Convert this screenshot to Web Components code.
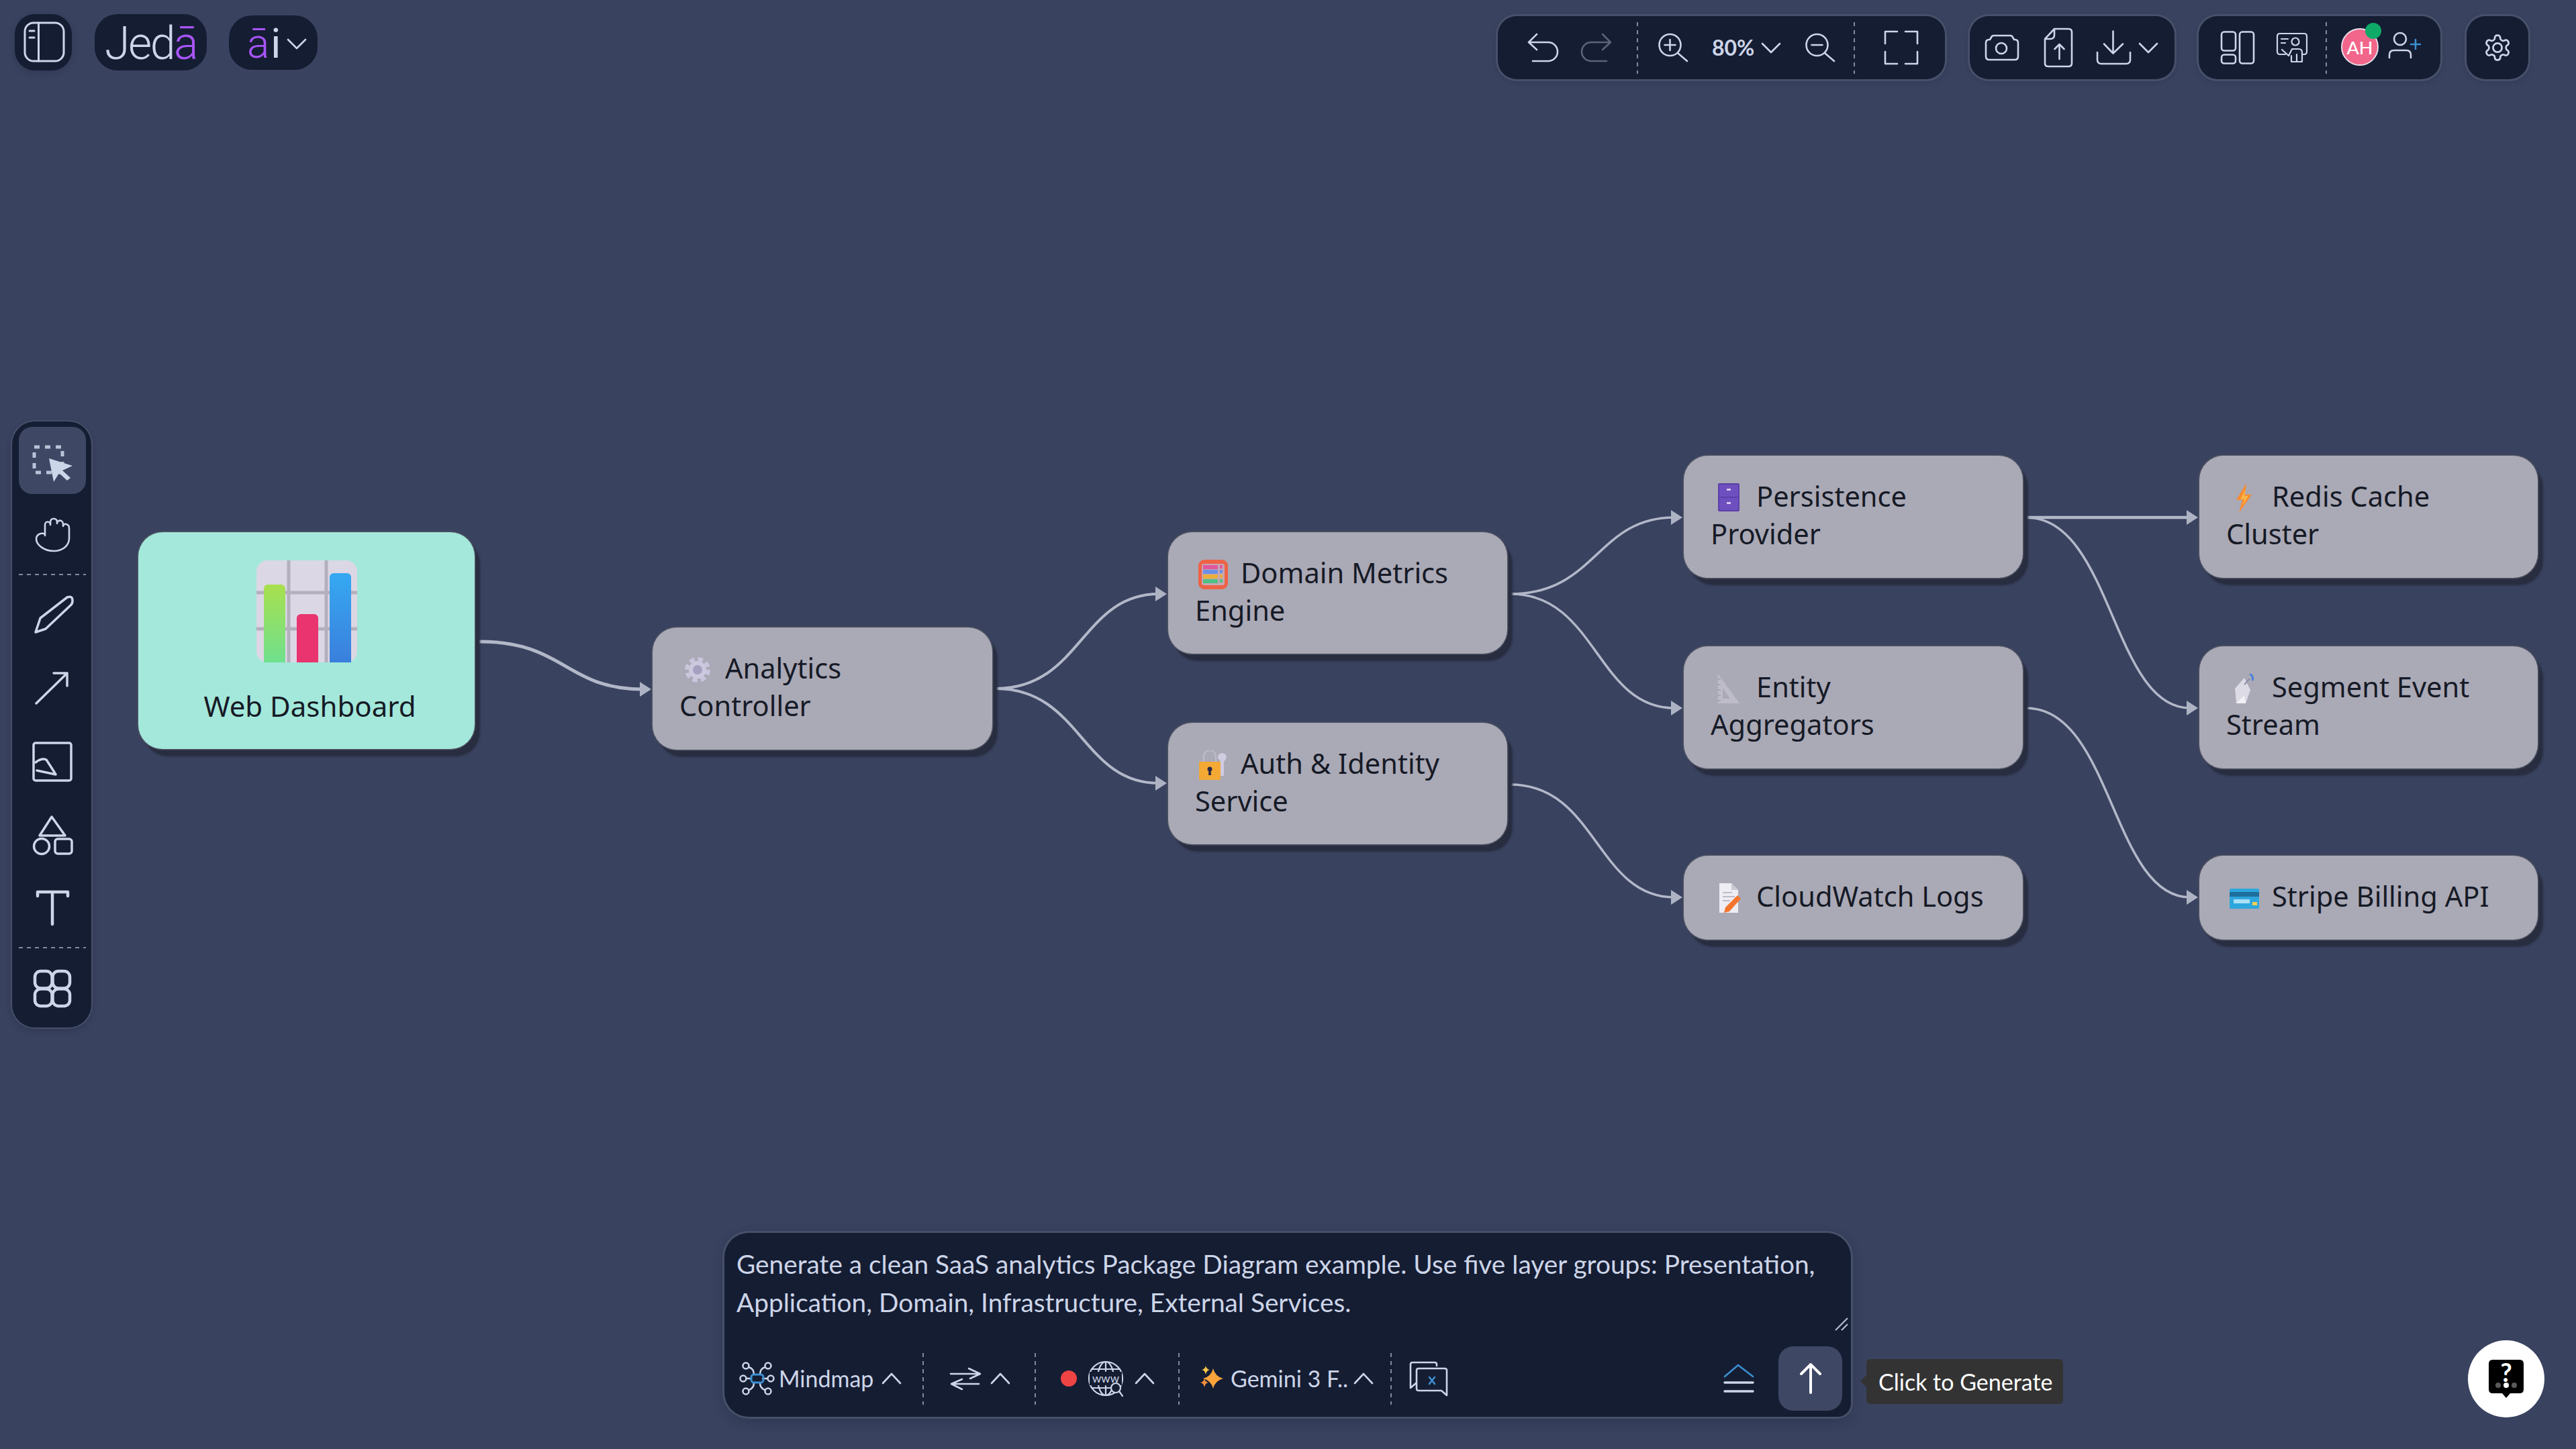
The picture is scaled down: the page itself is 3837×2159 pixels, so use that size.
<!DOCTYPE html>
<html lang="en">
<head>
<meta charset="utf-8">
<title>Jedā</title>
<style>
  html, body { margin: 0; padding: 0; background: #39425f; }
  body { font-family: "Lato", "Liberation Sans", sans-serif; color: #cdd5e8; }
</style>
</head>
<body>
<app-shell>
  <flow-canvas slot="canvas">
    <flow-node x="206" y="793" w="501" h="323" kind="root"><node-emoji slot="hero" name="chart" size="152"></node-emoji>Web Dashboard</flow-node>
    <flow-node x="972" y="935" w="506" h="182"><node-emoji name="gear"></node-emoji>Analytics<br>Controller</flow-node>
    <flow-node x="1740" y="793" w="505" h="181"><node-emoji name="metrics"></node-emoji>Domain Metrics<br>Engine</flow-node>
    <flow-node x="1740" y="1077" w="505" h="181"><node-emoji name="lock"></node-emoji>Auth &amp; Identity<br>Service</flow-node>
    <flow-node x="2508" y="679" w="505" h="182"><node-emoji name="cabinet"></node-emoji>Persistence<br>Provider</flow-node>
    <flow-node x="2508" y="963" w="505" h="182"><node-emoji name="ruler"></node-emoji>Entity<br>Aggregators</flow-node>
    <flow-node x="2508" y="1275" w="505" h="125"><node-emoji name="memo"></node-emoji>CloudWatch Logs</flow-node>
    <flow-node x="3276" y="679" w="504" h="182"><node-emoji name="bolt"></node-emoji>Redis Cache<br>Cluster</flow-node>
    <flow-node x="3276" y="963" w="504" h="182"><node-emoji name="dish"></node-emoji>Segment Event<br>Stream</flow-node>
    <flow-node x="3276" y="1275" w="504" h="125"><node-emoji name="card"></node-emoji>Stripe Billing API</flow-node>
  </flow-canvas>

  <top-bar slot="top">
    <tool-group slot="left" style="width:85px;height:84px;justify-content:center;--r:30px;--edge:transparent">
      <ui-icon name="panel"></ui-icon>
    </tool-group>
    <logo-mark slot="left" style="margin-left:34px;width:167px;height:84px"><span>Jed</span><b>ā</b></logo-mark>
    <logo-mark slot="left" small style="margin-left:33px;margin-top:2px;width:132px;height:81px"><b>ā</b><span>i</span><ui-icon name="chev-down" style="width:44px"></ui-icon></logo-mark>

    <tool-group slot="right" style="width:666px;padding-left:29px">
      <ui-icon name="undo" style="width:78px"></ui-icon>
      <ui-icon name="redo" style="width:78px;color:#5b6376"></ui-icon>
      <ui-sep style="margin:0 22px"></ui-sep>
      <ui-icon name="zoom-in" style="width:60px"></ui-icon>
      <ui-label style="margin-left:28px;width:62px;font-size:32px;font-weight:700">80%</ui-label>
      <ui-icon name="chev-down" style="width:52px"></ui-icon>
      <ui-icon name="zoom-out" style="width:94px"></ui-icon>
      <ui-sep style="margin-left:3px"></ui-sep>
      <ui-icon name="fullscreen" style="width:130px;margin-left:4px"></ui-icon>
    </tool-group>
    <tool-group slot="right" style="width:305px;margin-left:37px;padding-left:16px">
      <ui-icon name="camera"></ui-icon>
      <ui-icon name="upload" style="margin-left:20px"></ui-icon>
      <ui-icon name="download" style="margin-left:18px"></ui-icon>
      <ui-icon name="chev-down" style="width:40px"></ui-icon>
    </tool-group>
    <tool-group slot="right" style="width:360px;margin-left:36px;padding-left:26px">
      <ui-icon name="layout"></ui-icon>
      <ui-icon name="presenter" style="margin-left:17px"></ui-icon>
      <ui-sep style="margin-left:18px"></ui-sep>
      <user-avatar style="margin-left:21px">AH</user-avatar>
      <ui-icon name="user-plus" style="margin-left:3px"></ui-icon>
    </tool-group>
    <tool-group slot="right" style="width:92px;margin-left:39px;justify-content:center">
      <ui-icon name="gear"></ui-icon>
    </tool-group>
  </top-bar>

  <tool-rail slot="rail">
    <ui-icon box="72" name="select" active style="height:100px;width:100px;margin-top:8px"></ui-icon>
    <ui-icon box="72" name="hand" style="margin-top:24px"></ui-icon>
    <ui-sep horizontal style="margin-top:23px"></ui-sep>
    <ui-icon box="72" name="pencil" style="margin-top:20px"></ui-icon>
    <ui-icon box="72" name="arrow" style="margin-top:40px"></ui-icon>
    <ui-icon box="72" name="image" style="margin-top:38px"></ui-icon>
    <ui-icon box="72" name="shapes" style="margin-top:38px"></ui-icon>
    <ui-icon box="72" name="text" style="margin-top:37px"></ui-icon>
    <ui-sep horizontal style="margin-top:21px"></ui-sep>
    <ui-icon box="72" name="grid" style="margin-top:24px"></ui-icon>
  </tool-rail>

  <prompt-box slot="bottom">
    Generate a clean SaaS analytics Package Diagram example. Use five layer groups: Presentation, Application, Domain, Infrastructure, External Services.
    <ui-icon slot="row" name="mindmap"></ui-icon>
    <ui-label slot="row" style="width:140px;font-size:34px">Mindmap</ui-label>
    <ui-icon slot="row" name="chev-up" style="width:56px"></ui-icon>
    <ui-sep slot="row" style="margin:0 18px"></ui-sep>
    <ui-icon slot="row" name="swap" style="margin-left:11px"></ui-icon>
    <ui-icon slot="row" name="chev-up" style="width:42px"></ui-icon>
    <ui-sep slot="row" style="margin:0 30px"></ui-sep>
    <ui-icon slot="row" name="dot" style="width:38px;margin-left:0"></ui-icon>
    <ui-icon slot="row" name="globe" style="margin-left:4px"></ui-icon>
    <ui-icon slot="row" name="chev-up" style="width:52px"></ui-icon>
    <ui-sep slot="row" style="margin:0 24px"></ui-sep>
    <ui-icon slot="row" name="sparkle" style="width:50px"></ui-icon>
    <ui-label slot="row" style="margin-left:2px;width:174px;font-size:34px">Gemini 3 F..</ui-label>
    <ui-icon slot="row" name="chev-up" style="width:48px"></ui-icon>
    <ui-sep slot="row" style="margin:0 16px"></ui-sep>
    <ui-icon slot="row" name="chat-x" style="margin-left:7px"></ui-icon>
    <ui-icon slot="row" name="collapse" style="margin-left:auto"></ui-icon>
    <send-button slot="row" style="margin-left:28px"></send-button>
  </prompt-box>
  <hint-tip slot="bottom">Click to Generate</hint-tip>
  <help-fab slot="bottom"></help-fab>
</app-shell>

<script>
const BLUE = '#3b8fd0'

const ICONS = {
  panel: `<g style="stroke-width:3"><rect x="4" y="3" width="58" height="57" rx="13"/><path d="M24.500 3V60M11 15h7M11 25h7"/></g>`,
  'chev-down': `<path d="M19 26 32 39 45 26"/>`,
  'chev-up': `<path d="M19 39 32 25 45 39"/>`,
  undo: `<path d="M22 12 10 24 22 35M10 24H39a14 14 0 0 1 0 28H16"/>`,
  redo: `<path d="M42 12 54 24 42 35M54 24H25a14 14 0 0 0 0 28H48"/>`,
  'zoom-in': `<circle cx="27.5" cy="28" r="16"/><path d="M39 40 53 52M27.5 20V36M19.5 28H35.5"/>`,
  'zoom-out': `<circle cx="27.5" cy="28" r="16"/><path d="M39 40 53 52M19.5 28H35.5"/>`,
  fullscreen: `<path d="M8 26V8H26M38 8H56V26M8 38V56H26M38 56H56V38"/>`,
  camera: `<path d="M14 20 17 15Q18 14 20 14H44Q46 14 47 15L50 20H51Q56 20 56 25V45Q56 50 51 50H13Q8 50 8 45V25Q8 20 13 20Z"/><circle cx="31" cy="33" r="8"/>`,
  upload: `<path d="M26 4H47Q52 4 52 9V55Q52 60 47 60H17Q12 60 12 55V19ZM12 19H20Q26 19 26 13V4M33.5 49V27M26.5 34 33.5 27 40.5 34"/>`,
  download: `<path d="M31.5 7.5V40.5M18 26.5 31.5 40.5 46 26.5M8 39V50Q8 56 14 56H51Q57 56 57 50V39"/>`,
  layout: `<rect x="8" y="8.5" width="21" height="28" rx="4"/><rect x="8" y="42.5" width="21" height="13" rx="4"/><rect x="35" y="8.5" width="21" height="47" rx="4"/>`,
  presenter: `<path d="M22 42H14Q10 42 10 38V15Q10 11 14 11H50Q54 11 54 15V38Q54 42 50 42H47M16 19H26M16 25H22" style="stroke-width:2.200"/><circle cx="37" cy="23" r="5.5" style="stroke-width:2.200"/><path d="M17 35 27 44 32 34H42Q47 34 47 39V53H31V44M39 53V42" style="stroke-width:2.200"/>`,
  'user-plus': `<circle cx="29" cy="19" r="9"/><path d="M13 47V43Q13 36 20 36H38Q45 36 45 43V47"/><path d="M52 20V34M45 27H59" style="stroke:${BLUE}"/>`,
  gear: `<g transform="translate(10 10) scale(1.84)" style="stroke-width:1.5"><path d="M12.22 2h-.44a2 2 0 0 0-2 2v.18a2 2 0 0 1-1 1.73l-.43.25a2 2 0 0 1-2 0l-.15-.08a2 2 0 0 0-2.73.73l-.22.38a2 2 0 0 0 .73 2.73l.15.1a2 2 0 0 1 1 1.72v.51a2 2 0 0 1-1 1.74l-.15.09a2 2 0 0 0-.73 2.73l.22.38a2 2 0 0 0 2.73.73l.15-.08a2 2 0 0 1 2 0l.43.25a2 2 0 0 1 1 1.73V20a2 2 0 0 0 2 2h.44a2 2 0 0 0 2-2v-.18a2 2 0 0 1 1-1.73l.43-.25a2 2 0 0 1 2 0l.15.08a2 2 0 0 0 2.73-.73l.22-.39a2 2 0 0 0-.73-2.73l-.15-.08a2 2 0 0 1-1-1.74v-.5a2 2 0 0 1 1-1.74l.15-.09a2 2 0 0 0 .73-2.73l-.22-.38a2 2 0 0 0-2.73-.73l-.15.08a2 2 0 0 1-2 0l-.43-.25a2 2 0 0 1-1-1.73V4a2 2 0 0 0-2-2z"/><circle cx="12" cy="12" r="3.6"/></g>`,
  select: `<rect x="9" y="16" width="42" height="38" style="stroke-width:5;stroke-dasharray:8 8;stroke-linecap:butt;stroke:#b9c3d8"/><path d="M31 33 66 44 51 51 63 62 58 66 46 55 38 68Z" fill="currentColor" stroke="none"/>`,
  hand: `<path d="M25 38V22C25 16 33 16 33 22V18C33 11 43 11 43 18V20C43 14 52 14 52 21V24C52 19 61 20 61 27V42C61 54 50 61 38 61C24 61 12 52 12 43C12 36 20 33 25 36"/>`,
  pencil: `<path d="M11 65 18 44 58 13Q66 10 66 18 66 23 63 25L26 60Z" style="stroke-width:3.5"/>`,
  arrow: `<path d="M12 59 58 14M38 14H58V33" style="stroke-width:3.5"/>`,
  image: `<rect x="8" y="8" width="56" height="56" rx="3" style="stroke-width:3.5"/><path d="M11 37Q20 30 27 33 35 45 41 55L13 49" style="stroke-width:3.5"/>`,
  shapes: `<g style="stroke-width:3.5"><path d="M35 8 17 36H55Z"/><circle cx="20" cy="52" r="11.5"/><rect x="40" y="41" width="25" height="22" rx="4"/></g>`,
  text: `<path d="M14 17V11H59V17M36 11V59" style="stroke-width:4.5"/>`,
  grid: `<g style="stroke-width:4.500"><rect x="10" y="10" width="25.500" height="25.500" rx="8.500"/><rect x="36.500" y="10" width="25.500" height="25.500" rx="8.500"/><rect x="10" y="36.500" width="25.500" height="25.500" rx="8.500"/><rect x="36.500" y="36.500" width="25.500" height="25.500" rx="8.500"/></g>`,
  mindmap: `<g style="stroke-width:2.5"><circle cx="15" cy="13" r="4.5"/><circle cx="48" cy="13" r="4.5"/><circle cx="15" cy="51" r="4.5"/><circle cx="48" cy="51" r="4.5"/><circle cx="11" cy="32" r="4.5"/><circle cx="52" cy="32" r="4.5"/><path d="M19 15Q27 17 27 26M44 15Q36 17 36 26M19 49Q27 47 27 38M44 49Q36 47 36 38M15.500 32H23M40 32H47.500"/><rect x="23" y="26" width="18" height="12" rx="4" style="stroke:${BLUE};stroke-width:3"/></g>`,
  swap: `<path d="M11 25H55M38 17 55 25 40 32M12 40H53M28 33 12 40 28 48"/>`,
  dot: `<circle cx="32" cy="32" r="12" fill="#ef4444" stroke="none"/>`,
  globe: `<g style="stroke-width:2.2"><circle cx="32" cy="32" r="25"/><ellipse cx="32" cy="32" rx="12" ry="25"/><path d="M32 7V21M32 43V57M11 18H53M11 46H53"/><rect x="8" y="22" width="48" height="20" fill="#151d33" stroke="none"/><text x="32" y="37.500" text-anchor="middle" font-family="Lato, sans-serif" font-size="17" fill="currentColor" stroke="none">www</text><circle cx="47" cy="46" r="7" fill="#151d33"/><path d="M52 51 57 58"/></g>`,
  sparkle: `<g stroke="none"><path d="M33 17Q36 29 48 32 36 35 33 47 30 35 18 32 30 29 33 17Z" fill="#f9a33a"/><path d="M22 13Q23 18 28 19 23 20 22 26 21 20 16 19 21 18 22 13Z" fill="#f7c34a"/><path d="M20 32Q21 37 26 38 21 39 20 45 19 39 14 38 19 37 20 32Z" fill="#f58f3a"/></g>`,
  'chat-x': `<path d="M44 13V11Q44 8 41 8H8Q5 8 5 11V46L13 39M17 17H56Q59 17 59 20V57L51 50H17Q14 50 14 47V20Q14 17 17 17Z"/><path d="M33 30 41 40M41 30 33 40" style="stroke:${BLUE}"/>`,
  collapse: `<path d="M12 29 32 12 54 29" style="stroke:${BLUE}"/><path d="M12 38H54M12 51H54" style="stroke-width:3.500"/>`
}

const EMOJI = {
  chart: `<defs><linearGradient id="gr" x1="0" y1="0" x2="0" y2="1"><stop offset="0" stop-color="#a8e04e"/><stop offset="1" stop-color="#6fe08e"/></linearGradient><linearGradient id="bl" x1="0" y1="0" x2="0" y2="1"><stop offset="0" stop-color="#36a9f2"/><stop offset="1" stop-color="#3a7fdc"/></linearGradient></defs>
    <rect x="0" y="0" width="150" height="152" rx="16" fill="#dcd7e4"/>
    <path d="M48 0V152M104 0V152M0 48H150M0 102H150" stroke="#b4afbc" stroke-width="5" fill="none"/>
    <path d="M11 42a6 6 0 0 1 6-6h20a6 6 0 0 1 6 6V152H11Z" fill="url(#gr)"/>
    <path d="M60 86a6 6 0 0 1 6-6h20a6 6 0 0 1 6 6V152H60Z" fill="#e9346f"/>
    <path d="M109 25a6 6 0 0 1 6-6h20a6 6 0 0 1 6 6V152H109Z" fill="url(#bl)"/>`,
  gear: `<circle cx="22" cy="22" r="15" fill="none" stroke="#c9c5dc" stroke-width="8" stroke-dasharray="7 4.800"/><circle cx="22" cy="22" r="13" fill="#ccc8de"/><circle cx="22" cy="22" r="7" fill="#a5a0bf"/>`,
  metrics: `<rect x="0" y="0" width="44" height="44" rx="9" fill="#ee6245"/><rect x="5" y="6" width="34" height="32" rx="3" fill="#c7a6b4"/><rect x="7" y="8" width="22" height="6" fill="#e1579c"/><rect x="7" y="15" width="22" height="6" fill="#6a8fe6"/><rect x="7" y="22" width="22" height="6" fill="#e9b03a"/><rect x="7" y="29" width="22" height="6" fill="#4fc084"/><rect x="32" y="8" width="4" height="5" fill="#e1579c"/><rect x="32" y="15" width="4" height="5" fill="#6a8fe6"/><rect x="32" y="22" width="4" height="5" fill="#e9b03a"/><rect x="32" y="29" width="4" height="5" fill="#4fc084"/>`,
  lock: `<path d="M8 18V9a9 9 0 0 1 18 0v9" fill="none" stroke="#bdb9c9" stroke-width="2.500"/><path d="M36 4a6 6 0 0 1 5 9l-3 4V38h-5V17l-3-4a6 6 0 0 1 6-9Z" fill="#cfcbe0"/><rect x="1" y="17" width="32" height="27" rx="1" fill="#f3a933"/><circle cx="17" cy="28" r="3.500" fill="#2d2a4a"/><path d="M15.500 29h3l.500 8h-4Z" fill="#2d2a4a"/>`,
  cabinet: `<rect x="6" y="0" width="32" height="42" rx="2" fill="#5b3fa8"/><rect x="8" y="2" width="28" height="18" fill="#6d4fc0"/><rect x="8" y="22" width="28" height="18" fill="#6d4fc0"/><rect x="19" y="8" width="6" height="3" fill="#d5c9f2"/><rect x="19" y="28" width="6" height="3" fill="#d5c9f2"/>`,
  ruler: `<path d="M6 0 38 44H6Z" fill="#bdbcc8"/><path d="M13 21 24 37H13Z" fill="#aaa9b6"/><path d="M6 8h4M6 16h4M6 24h4M6 32h4M6 40h4" stroke="#9d9caa" stroke-width="1.500"/>`,
  bolt: `<path d="M25 0 10 25H19L14 44 33 17H23Z" fill="#f98b2e"/><path d="M24 8 16 24H22L19 34 28 19H22Z" fill="#fbb64b"/>`,
  dish: `<path d="M10 44 8 22 22 6 31 24 24 44Z" fill="#dcdbe6"/><path d="M10 44 22 32 24 44Z" fill="#f2f2f6"/><path d="M30 0a8 8 0 0 1 4 10" fill="none" stroke="#4a7fd8" stroke-width="3"/><path d="M22 16 30 7" stroke="#8a8ea8" stroke-width="2"/>`,
  memo: `<path d="M8 0H26L36 10V44H8Z" fill="#eeedf3"/><path d="M26 0V10H36Z" fill="#c9c8d4"/><path d="M13 14H27M13 20H31M13 26H24" stroke="#bdbcc8" stroke-width="2"/><path d="M35 18 40 23 23 42 15 44 17 36Z" fill="#f5752e"/>`,
  card: `<rect x="0" y="8" width="44" height="30" rx="2" fill="#2da7de"/><rect x="0" y="13" width="44" height="7" fill="#1d6e9c"/><rect x="6" y="24" width="24" height="6" fill="#a9e0f5"/><rect x="34" y="28" width="7" height="5" fill="#f3d14e"/>`
}

class AppShell extends HTMLElement {
  connectedCallback () {
    this.attachShadow({ mode: 'open' }).innerHTML = /* html */`
    <style>
      :host { display: grid; position: relative; width: 100vw; height: 100vh; overflow: hidden;
        grid-template-rows: auto 1fr auto; background: #39425f; }
      .canvas { position: absolute; inset: 0; }
      .mid, .bottom, .top { position: relative; }
      .bottom { display: flex; align-items: flex-end; padding: 0 47px 48px 1079px; }
      .mid { display: flex; align-items: flex-start; padding: 510px 0 0 18px; }
    </style>
    <div class="canvas"><slot name="canvas"></slot></div>
    <div class="top"><slot name="top"></slot></div>
    <div class="mid"><slot name="rail"></slot></div>
    <div class="bottom"><slot name="bottom"></slot></div>`
  }
}

class TopBar extends HTMLElement {
  connectedCallback () {
    this.attachShadow({ mode: 'open' }).innerHTML = /* html */`
    <style>
      :host { display: flex; align-items: flex-start; padding: 21px 71px 0 22px; height: 97px; }
      .side { display: flex; align-items: flex-start; }
      .right { margin-left: auto; margin-top: 3px; }
    </style>
    <div class="side"><slot name="left"></slot></div>
    <div class="side right"><slot name="right"></slot></div>`
  }
}

class ToolGroup extends HTMLElement {
  connectedCallback () {
    this.attachShadow({ mode: 'open' }).innerHTML = /* html */`
    <style>
      :host { display: flex; align-items: center; box-sizing: border-box; height: 94px; flex: none;
        background: #151d33; border-radius: var(--r, 28px);
        box-shadow: 0 0 0 3px var(--edge, #465069), 0 3px 8px rgba(20, 26, 48, .25); color: #cdd5e8; }
    </style>
    <slot></slot>`
  }
}

class LogoMark extends HTMLElement {
  connectedCallback () {
    this.attachShadow({ mode: 'open' }).innerHTML = /* html */`
    <style>
      :host { display: flex; align-items: center; justify-content: center; flex: none; background: #151d33; box-sizing: border-box;
        border-radius: 34px; padding-top: 4px; font: 300 68px/1 "Roboto", sans-serif; letter-spacing: -2.5px; color: #cdd5e8; }
      :host([small]) { font-size: 62px; letter-spacing: 2px; padding: 3px 0 0 27px; justify-content: flex-start; font-weight: 400; }
      ::slotted(b) { font-weight: 300; color: #a855f7; }
    </style>
    <slot></slot>`
  }
}

class UiIcon extends HTMLElement {
  connectedCallback () {
    const box = this.getAttribute('box') || 64
    this.attachShadow({ mode: 'open' }).innerHTML = /* html */`
    <style>
      :host { display: flex; align-items: center; justify-content: center; flex: none; width: ${box}px; height: ${box}px; color: #cdd5e8; }
      :host([active]) { background: #3e4763; border-radius: 20px; color: #cbd6e8; }
      svg { flex: none; display: block; fill: none; stroke: currentColor; stroke-width: 2.600; stroke-linecap: round; stroke-linejoin: round; overflow: visible; }
    </style>
    <svg width="${box}" height="${box}" viewBox="0 0 ${box} ${box}">${ICONS[this.getAttribute('name')] || ''}</svg>`
  }
}

class UiSep extends HTMLElement {
  connectedCallback () {
    this.attachShadow({ mode: 'open' }).innerHTML = /* html */`
    <style>
      :host { display: block; flex: none; width: 2px; height: 77px;
        background: repeating-linear-gradient(to bottom, #7f89a3 0 6px, transparent 6px 12px); }
      :host([horizontal]) { width: 100px; height: 2px;
        background: repeating-linear-gradient(to right, #7f89a3 0 6px, transparent 6px 12px); }
    </style>`
  }
}

class UiLabel extends HTMLElement {
  connectedCallback () {
    this.attachShadow({ mode: 'open' }).innerHTML = /* html */`
    <style>
      :host { display: block; flex: none; white-space: nowrap; color: #cdd5e8; line-height: 1; }
    </style>
    <slot></slot>`
  }
}

class UserAvatar extends HTMLElement {
  connectedCallback () {
    this.attachShadow({ mode: 'open' }).innerHTML = /* html */`
    <style>
      :host { display: flex; align-items: center; justify-content: center; position: relative; flex: none;
        box-sizing: border-box; width: 56px; height: 56px; margin-top: -2px; border-radius: 50%; background: #f2668b;
        border: 2px solid #e6dfe8; color: #fff; font: 500 27px "Lato", sans-serif; }
      .dot { position: absolute; top: -10px; right: -6px; width: 24px; height: 24px; border-radius: 50%; background: #0fa968; }
    </style>
    <slot></slot><span class="dot"></span>`
  }
}

class ToolRail extends HTMLElement {
  connectedCallback () {
    this.attachShadow({ mode: 'open' }).innerHTML = /* html */`
    <style>
      :host { display: flex; flex-direction: column; align-items: center; box-sizing: border-box; width: 118px; height: 903px; padding-left: 2px;
        background: #151d33; border-radius: 34px; box-shadow: 0 0 0 2px #465069, 0 4px 10px rgba(20, 26, 48, .3); }
    </style>
    <slot></slot>`
  }
}

class FlowCanvas extends HTMLElement {
  connectedCallback () {
    // x0, y0, x1, y1, stroke
    const wires = [
      [714, 956, 970, 1027, 5],
      [1483, 1026, 1738, 885, 4],
      [1483, 1026, 1738, 1167, 4],
      [2250, 885, 2506, 771, 3.500],
      [2250, 885, 2506, 1055, 3.500],
      [2250, 1169, 2506, 1337, 3.500],
      [3018, 771, 3274, 771, 4.500],
      [3018, 771, 3274, 1055, 3.500],
      [3018, 1055, 3274, 1337, 3.500]
    ]
    const paths = wires.map(([x0, y0, x1, y1, w]) => {
      const mid = (x0 + x1) / 2
      return `<path d="M${x0} ${y0}C${mid} ${y0} ${mid} ${y1} ${x1 - 12} ${y1}" fill="none" stroke="#b3b8c9" stroke-width="${w}"/>` +
        `<polygon points="${x1},${y1} ${x1 - 17},${y1 - 11} ${x1 - 17},${y1 + 11}" fill="#aeb3c4"/>`
    }).join('')
    this.attachShadow({ mode: 'open' }).innerHTML = /* html */`
    <style>
      :host { display: block; position: absolute; inset: 0; }
      svg { position: absolute; left: 0; top: 0; }
    </style>
    <svg width="3837" height="2159" viewBox="0 0 3837 2159">${paths}</svg>
    <slot></slot>`
  }
}

class FlowNode extends HTMLElement {
  connectedCallback () {
    const at = name => this.getAttribute(name)
    this.attachShadow({ mode: 'open' }).innerHTML = /* html */`
    <style>
      :host { position: absolute; left: ${at('x')}px; top: ${at('y')}px; width: ${at('w')}px; height: ${at('h')}px;
        display: flex; flex-direction: column; justify-content: center; box-sizing: border-box; padding: 0 40px 6px;
        background: #aaa9b6; border-radius: 36px; color: #161a26;
        box-shadow: 0 0 0 1.500px #4e5262, 8px 11px 3px #282d40;
        font: 400 41.600px/56px "Noto Sans", "Open Sans", sans-serif; }
      :host([kind=root]) { background: #a3e8da; align-items: center; justify-content: flex-start; padding: 42px 0 0; font-size: 42px; }
      :host([kind=root]) .text { margin-top: 37px; padding-left: 10px; }
      .text { white-space: nowrap; }
    </style>
    <slot name="hero"></slot>
    <div class="text"><slot></slot></div>`
  }
}

class NodeEmoji extends HTMLElement {
  connectedCallback () {
    const size = this.getAttribute('size')
    const name = this.getAttribute('name')
    const s = size || 44
    const vb = name === 'chart' ? '0 0 150 152' : '0 0 44 44'
    this.attachShadow({ mode: 'open' }).innerHTML = /* html */`
    <style>
      :host { display: inline-block; width: ${s}px; height: ${s}px; ${size ? '' : 'margin: 0 19px 0 5px; vertical-align: -9px;'} }
      svg { display: block; }
    </style>
    <svg width="${s}" height="${s}" viewBox="${vb}">${EMOJI[name] || ''}</svg>`
  }
}

class PromptBox extends HTMLElement {
  connectedCallback () {
    this.attachShadow({ mode: 'open' }).innerHTML = /* html */`
    <style>
      :host { display: flex; flex-direction: column; box-sizing: border-box; flex: none; position: relative; width: 1678px; height: 274px;
        background: #151d33; border-radius: 36px 36px 20px 36px; box-shadow: 0 0 0 3px #465069, 0 6px 18px rgba(20, 26, 48, .3); padding: 18px 13px 9px 17px; }
      .text { font: 400 38.800px/57px "Lato", sans-serif; color: #cdd5e8; padding: 0 0 0 1px; width: 1640px; flex: 1; }
      .row { display: flex; align-items: center; height: 96px; }
      .grip { position: absolute; right: 4px; top: 126px; }
    </style>
    <div class="text"><slot></slot></div>
    <svg class="grip" width="20" height="20" viewBox="0 0 20 20" fill="none" stroke="#b9c0d2" stroke-width="2"><path d="M1 19 19 1M10 19 19 10"/></svg>
    <div class="row"><slot name="row"></slot></div>`
  }
}

class SendButton extends HTMLElement {
  connectedCallback () {
    this.attachShadow({ mode: 'open' }).innerHTML = /* html */`
    <style>
      :host { display: flex; align-items: center; justify-content: center; flex: none; width: 95px; height: 96px; border-radius: 22px; background: #3e4763; }
    </style>
    <svg width="40" height="48" viewBox="0 0 40 48" fill="none" stroke="#fff" stroke-width="4" stroke-linecap="round" stroke-linejoin="round"><path d="M20 3V45M6 17 20 3 34 17"/></svg>`
  }
}

class HintTip extends HTMLElement {
  connectedCallback () {
    this.attachShadow({ mode: 'open' }).innerHTML = /* html */`
    <style>
      :host { display: flex; align-items: center; position: relative; flex: none; box-sizing: border-box; width: 293px; height: 67px;
        margin: 0 0 19px 23px; padding-left: 18px; background: #333333; border-radius: 6px; color: #fff;
        font: 400 34px "Lato", sans-serif; white-space: nowrap; }
      :host::before { content: ""; position: absolute; left: -9px; top: 24px; border: 9px solid transparent; border-left: 0; border-right-color: #333333; }
    </style>
    <slot></slot>`
  }
}

class HelpFab extends HTMLElement {
  connectedCallback () {
    this.attachShadow({ mode: 'open' }).innerHTML = /* html */`
    <style>
      :host { display: flex; align-items: center; justify-content: center; flex: none; width: 114px; height: 115px;
        margin-left: auto; margin-bottom: -1px; border-radius: 50%; background: #fff; }
      text { font: 700 38px "Lato", sans-serif; fill: #fff; }
    </style>
    <svg width="52" height="58" viewBox="0 0 52 58"><path d="M6 0H46Q52 0 52 6V44Q52 50 46 50H32L26 57 20 50H6Q0 50 0 44V6Q0 0 6 0Z" fill="#000"/><text x="26" y="33" text-anchor="middle">?</text><circle cx="14" cy="38" r="4" fill="#5a5a5a"/><circle cx="26" cy="38" r="4" fill="#fff"/><circle cx="38" cy="38" r="4" fill="#5a5a5a"/></svg>`
  }
}

customElements.define('ui-icon', UiIcon)
customElements.define('ui-sep', UiSep)
customElements.define('ui-label', UiLabel)
customElements.define('node-emoji', NodeEmoji)
customElements.define('flow-node', FlowNode)
customElements.define('flow-canvas', FlowCanvas)
customElements.define('tool-group', ToolGroup)
customElements.define('logo-mark', LogoMark)
customElements.define('user-avatar', UserAvatar)
customElements.define('top-bar', TopBar)
customElements.define('tool-rail', ToolRail)
customElements.define('send-button', SendButton)
customElements.define('prompt-box', PromptBox)
customElements.define('hint-tip', HintTip)
customElements.define('help-fab', HelpFab)
customElements.define('app-shell', AppShell)
</script>
</body>
</html>
